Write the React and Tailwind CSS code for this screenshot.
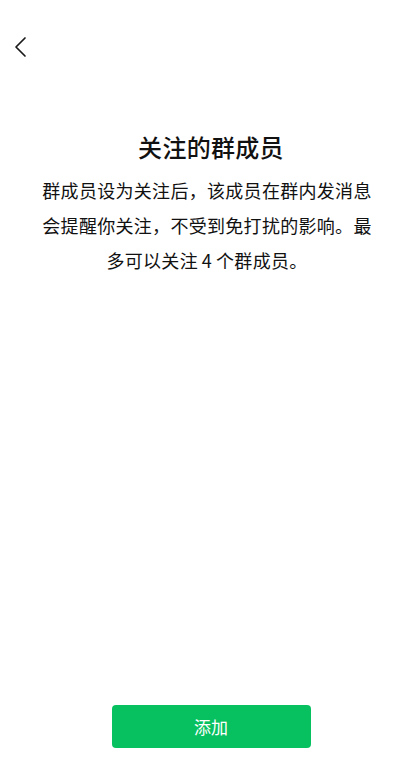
const BackIcon = () => (
  <svg width="14" height="22" viewBox="0 0 14 22" fill="none">
    <polyline
      points="11,2 2,11 11,20"
      stroke="#1a1a1a"
      strokeWidth="1.7"
      strokeLinecap="round"
      strokeLinejoin="round"
    />
  </svg>
);

const lines = [
  '群成员设为关注后，该成员在群内发消息',
  '会提醒你关注，不受到免打扰的影响。最',
  '多可以关注\u20094\u2009个群成员。',
];

const App = () => {
  return (
    <div
      className="h-[772px] bg-white flex flex-col overflow-hidden"
      style={{ fontFamily: '"Noto Sans CJK SC", "Noto Sans", sans-serif' }}
    >
      {/* Barra superior */}
      <div className="h-[94px] pt-[36px] pl-[14px]">
        <BackIcon />
      </div>

      {/* Contenido */}
      <main className="flex-1 flex flex-col items-center">
        <h1 className="ml-[16px] mt-[38px] text-[24px] leading-[30px] font-medium tracking-[0.3px] text-[#111]">
          关注的群成员
        </h1>
        <div className="mt-[11px] w-full pl-[40px] pr-[32px] text-center text-[18px] tracking-[0.3px] text-[#111]">
          {lines.map((line) => (
            <div key={line} className="h-[35px] leading-[35px] whitespace-nowrap">
              {line}
            </div>
          ))}
        </div>
      </main>

      {/* Botón */}
      <div className="flex justify-center pl-[16px] pb-[24px]">
        <button className="w-[199px] h-[43px] rounded-[4px] bg-[#07c160] text-white text-[17px]">
          添加
        </button>
      </div>
    </div>
  );
};

export default App;
